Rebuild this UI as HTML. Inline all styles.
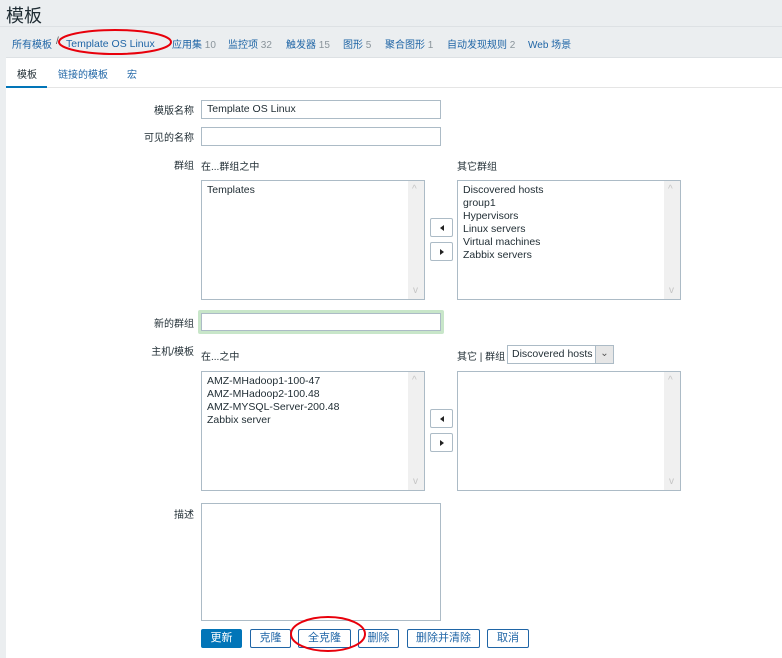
<!DOCTYPE html>
<html><head><meta charset="utf-8"><style>
*{margin:0;padding:0;box-sizing:border-box}
body{width:782px;height:656px;overflow:hidden;background:#ebeef0;font-family:"Liberation Sans","Noto Sans CJK SC",sans-serif;font-size:10px;color:#1f2c33;position:relative}
.a{position:absolute;white-space:nowrap}
.lnk{color:#1f65a6}
.cnt{color:#8a949b}
.lat{font-size:10.5px}
.bc{position:absolute;top:36px;white-space:nowrap}
.lbl{position:absolute;right:588px;white-space:nowrap}
.inp{position:absolute;border:1px solid #acbbc6;background:#fff;height:19px;font-size:10.5px;overflow:hidden}
.lb{position:absolute;border:1px solid #acbbc6;background:#fff;width:224px;height:120px;font-size:10.5px}
.lb .sb{position:absolute;right:0;top:0;bottom:0;width:16px;background:#f0f0f0}
.lb .sb:before{content:"^";position:absolute;top:3px;left:4px;color:#c4c4c4;font-size:10px}
.lb .sb:after{content:"v";position:absolute;bottom:3px;left:5px;color:#c4c4c4;font-size:10px}
.lb .it{padding:3px 5px;line-height:13px}
.ar{position:absolute;left:430px;width:23px;height:19px;border:1px solid #acbbc6;background:#fff;border-radius:2px}
.ar span{position:absolute;top:6px;left:9px;width:0;height:0;border-top:3px solid transparent;border-bottom:3px solid transparent}
.btn{position:absolute;top:629px;height:19px;border:1px solid #1f65a6;color:#1f65a6;background:#fff;border-radius:2px;text-align:center;line-height:17px;font-size:11px}
</style></head><body>
<div class="a" style="left:6px;top:2px;font-size:18px;color:#1f2c33">模板</div>
<div class="a" style="left:0;top:26px;width:782px;height:1px;background:#dde1e4"></div>
<span class="bc lnk" style="left:12px">所有模板</span>
<span class="bc" style="left:56px;color:#555">/</span>
<span class="bc lnk lat" style="left:66px;top:38px">Template OS Linux</span>
<span class="bc" style="left:172px"><span class="lnk">应用集</span> <span class="cnt">10</span></span>
<span class="bc" style="left:228px"><span class="lnk">监控项</span> <span class="cnt">32</span></span>
<span class="bc" style="left:286px"><span class="lnk">触发器</span> <span class="cnt">15</span></span>
<span class="bc" style="left:343px"><span class="lnk">图形</span> <span class="cnt">5</span></span>
<span class="bc" style="left:385px"><span class="lnk">聚合图形</span> <span class="cnt">1</span></span>
<span class="bc" style="left:447px"><span class="lnk">自动发现规则</span> <span class="cnt">2</span></span>
<span class="bc lnk" style="left:528px">Web 场景</span>
<div class="a" style="left:6px;top:57px;width:776px;height:1px;background:#dde1e4"></div>
<div class="a" style="left:6px;top:58px;width:776px;height:600px;background:#fff"></div>
<div class="a" style="left:6px;top:87px;width:776px;height:1px;background:#e5e5e5"></div>
<div class="a" style="left:6px;top:86px;width:41px;height:2px;background:#0275b8"></div>
<div class="a" style="left:17px;top:66px">模板</div>
<div class="a lnk" style="left:58px;top:66px">链接的模板</div>
<div class="a lnk" style="left:127px;top:66px">宏</div>

<div class="lbl" style="top:102px">模版名称</div>
<div class="inp" style="left:201px;top:100px;width:240px;padding:2px 5px">Template OS Linux</div>
<div class="lbl" style="top:129px">可见的名称</div>
<div class="inp" style="left:201px;top:127px;width:240px"></div>

<div class="lbl" style="top:157px">群组</div>
<div class="a" style="left:201px;top:158px">在...群组之中</div>
<div class="a" style="left:457px;top:158px">其它群组</div>
<div class="lb" style="left:201px;top:180px"><div class="it">Templates</div><div class="sb"></div></div>
<div class="ar" style="top:218px"><span style="border-right:4px solid #222"></span></div>
<div class="ar" style="top:242px"><span style="border-left:4px solid #222"></span></div>
<div class="lb" style="left:457px;top:180px"><div class="it">Discovered hosts<br>group1<br>Hypervisors<br>Linux servers<br>Virtual machines<br>Zabbix servers</div><div class="sb"></div></div>

<div class="lbl" style="top:315px">新的群组</div>
<div class="a" style="left:198px;top:310px;width:246px;height:24px;background:#c8e6c9;border-radius:2px"></div>
<div class="inp" style="left:201px;top:313px;width:240px;height:18px"></div>

<div class="lbl" style="top:343px">主机/模板</div>
<div class="a" style="left:201px;top:348px">在...之中</div>
<div class="a" style="left:457px;top:348px">其它 | 群组</div>
<div class="inp" style="left:507px;top:345px;width:107px;padding:2px 4px">Discovered hosts</div>
<div class="a" style="left:595px;top:346px;width:18px;height:17px;background:#e6e6e6;border-left:1px solid #acbbc6;text-align:center;color:#555;line-height:15px">&#8964;</div>
<div class="lb" style="left:201px;top:371px"><div class="it">AMZ-MHadoop1-100-47<br>AMZ-MHadoop2-100.48<br>AMZ-MYSQL-Server-200.48<br>Zabbix server</div><div class="sb"></div></div>
<div class="ar" style="top:409px"><span style="border-right:4px solid #222"></span></div>
<div class="ar" style="top:433px"><span style="border-left:4px solid #222"></span></div>
<div class="lb" style="left:457px;top:371px"><div class="sb"></div></div>

<div class="lbl" style="top:506px">描述</div>
<div class="inp" style="left:201px;top:503px;width:240px;height:118px"></div>

<div class="btn" style="left:201px;width:41px;background:#0275b8;border-color:#0275b8;color:#fff">更新</div>
<div class="btn" style="left:250px;width:41px">克隆</div>
<div class="btn" style="left:298px;width:53px">全克隆</div>
<div class="btn" style="left:358px;width:41px">删除</div>
<div class="btn" style="left:407px;width:73px">删除并清除</div>
<div class="btn" style="left:487px;width:42px">取消</div>

<svg class="a" style="left:0;top:0" width="782" height="656">
<ellipse cx="115" cy="42" rx="56" ry="12" fill="none" stroke="#e8000b" stroke-width="2"/>
<ellipse cx="328" cy="634" rx="37" ry="17" fill="none" stroke="#e8000b" stroke-width="2"/>
</svg>
</body></html>
